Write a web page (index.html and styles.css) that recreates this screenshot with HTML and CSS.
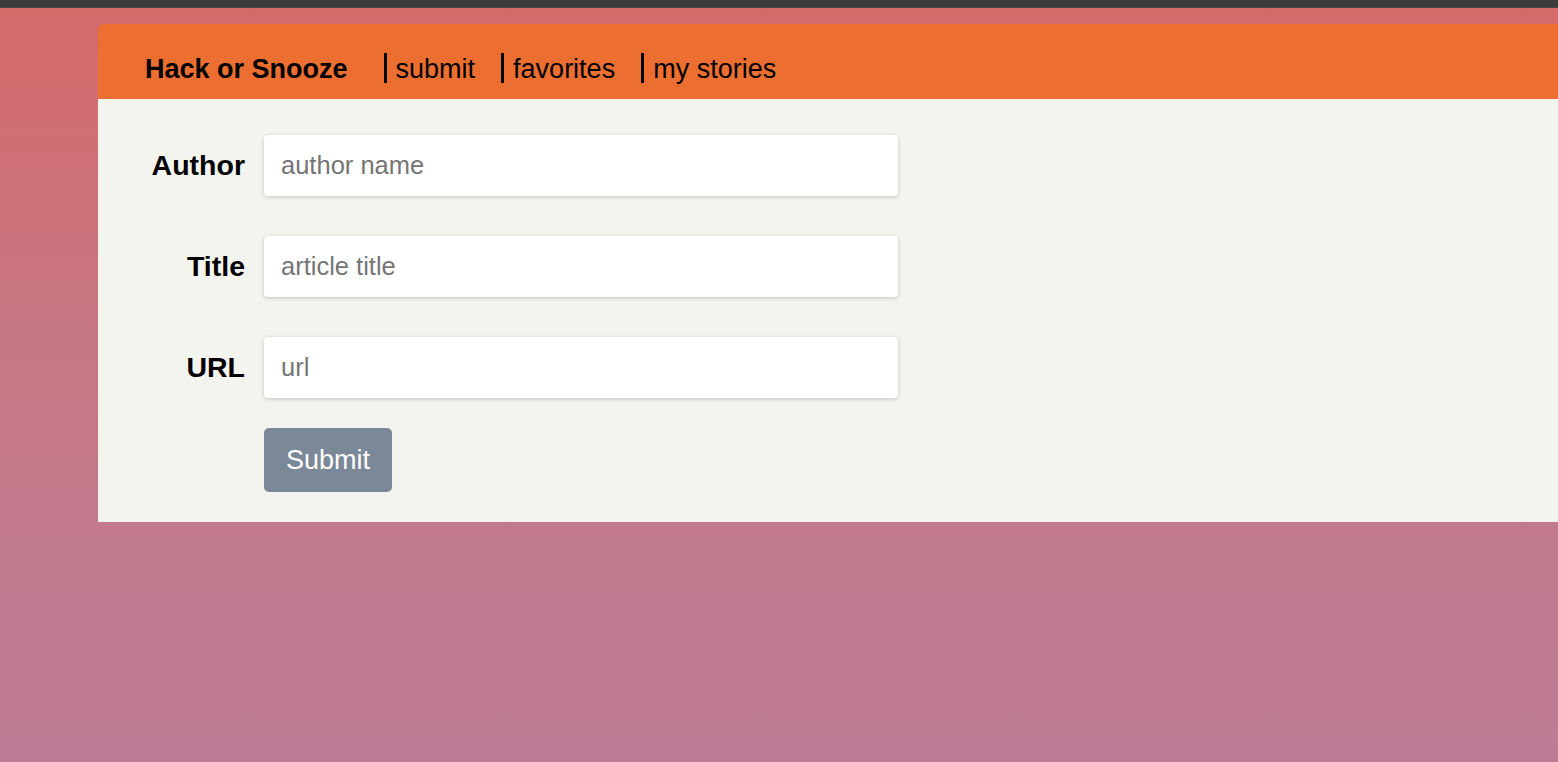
FILE: index.html
```html
<!DOCTYPE html>
<html lang="en">
<head>
<meta charset="utf-8">
<title>Hack or Snooze</title>
<link rel="stylesheet" href="styles.css">
</head>
<body>
<div class="topbar"></div>
<div class="page">
  <div class="container">
    <nav class="nav">
      <span class="brand">Hack or Snooze</span>
      <a class="nav-link" href="#">submit</a>
      <a class="nav-link" href="#">favorites</a>
      <a class="nav-link" href="#">my stories</a>
    </nav>
    <section class="panel">
      <form class="story-form">
        <div class="field">
          <label class="field-label" for="author">Author</label>
          <input class="field-input" id="author" type="text" placeholder="author name">
        </div>
        <div class="field">
          <label class="field-label" for="title">Title</label>
          <input class="field-input" id="title" type="text" placeholder="article title">
        </div>
        <div class="field">
          <label class="field-label" for="url">URL</label>
          <input class="field-input" id="url" type="text" placeholder="url">
        </div>
        <div class="actions">
          <button class="submit-btn" type="button">Submit</button>
        </div>
      </form>
    </section>
  </div>
</div>
</body>
</html>
```
FILE: styles.css
```css
html, body {
  margin: 0;
  padding: 0;
  height: 100%;
  overflow: hidden;
}

body {
  font-family: "Liberation Sans", Arial, Helvetica, sans-serif;
  background: #3b3b3b;
  display: flex;
  flex-direction: column;
}

.topbar {
  height: 7px;
  background: #3b3b3b;
  border-bottom: 1px solid #4a4a4a;
  flex: none;
}

.page {
  flex: 1;
  background: linear-gradient(180deg, #d56a6a 0%, #c67784 45%, #bd7c96 100%);
  padding-top: 16px;
  padding-left: 98px;
}

.container {
  border-radius: 6px 0 0 0;
  overflow: hidden;
}

.nav {
  background: #ec6e30;
  height: 75px;
  box-sizing: border-box;
  padding: 29px 0 16px 47px;
  display: flex;
  align-items: flex-start;
  gap: 26px;
}

.brand {
  font-weight: bold;
  font-size: 27px;
  line-height: 30px;
  padding-top: 1px;
  color: #000;
  margin-right: 10px;
}

.nav-link {
  font-size: 27px;
  line-height: 30px;
  height: 30px;
  box-sizing: border-box;
  padding-top: 1px;
  color: #000;
  text-decoration: none;
  border-left: 3px solid #000;
  padding-left: 9px;
}

.panel {
  background: #f4f4ef;
  padding: 36px 0 30px 0;
}

.story-form {
  display: flex;
  flex-direction: column;
}

.field {
  display: flex;
  align-items: center;
  gap: 19px;
}

.field + .field {
  margin-top: 40px;
}

.field-label {
  width: 147px;
  text-align: right;
  font-weight: bold;
  font-size: 28.5px;
  color: #000;
}

.field-input {
  width: 634px;
  height: 61px;
  box-sizing: border-box;
  border: none;
  border-radius: 4px;
  background: #fff;
  box-shadow: 0 1px 4px rgba(0, 0, 0, 0.2);
  padding: 0 16px 0 17px;
  font-family: "Liberation Sans", Arial, Helvetica, sans-serif;
  font-size: 25.5px;
  color: #333;
  outline: none;
}

.field-input::placeholder {
  color: #757575;
}

.actions {
  margin-top: 30px;
  padding-left: 166px;
}

.submit-btn {
  width: 128px;
  height: 64px;
  border: none;
  border-radius: 5px;
  background: #7b8898;
  color: #fff;
  font-family: "Liberation Sans", Arial, Helvetica, sans-serif;
  font-size: 27px;
  padding: 0;
}
```
